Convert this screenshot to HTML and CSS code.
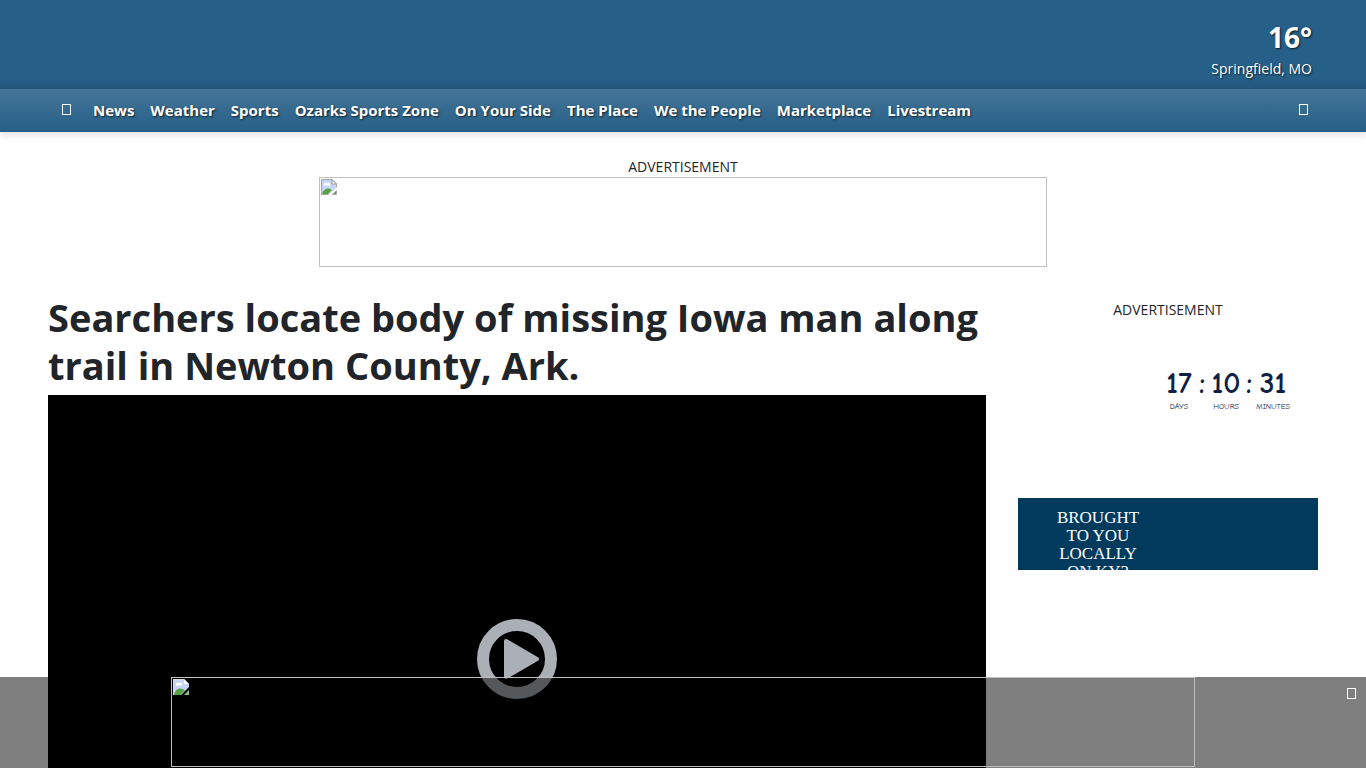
FILE: index.html
```html
<!DOCTYPE html>
<html lang="en">
<head>
    <meta charset="UTF-8">
    <meta name="viewport" content="width=device-width, initial-scale=1.0">
    <title>Searchers locate body of missing Iowa man along trail in Newton County, Ark.</title>
    <link rel="stylesheet" href="styles.css">
</head>
<body>
    <header class="site-header">
        <div class="masthead">
            <a href="#weather" class="weather">
                <span class="temp">16°</span>
                <span class="city">Springfield, MO</span>
            </a>
        </div>
        <nav class="main-nav">
            <a href="#home" class="nav-home" aria-label="Home"><span class="glyph"></span></a>
            <ul>
                <li><a href="#news">News</a></li>
                <li><a href="#weather">Weather</a></li>
                <li><a href="#sports">Sports</a></li>
                <li><a href="#ozarks">Ozarks Sports Zone</a></li>
                <li><a href="#onyourside">On Your Side</a></li>
                <li><a href="#theplace">The Place</a></li>
                <li><a href="#people">We the People</a></li>
                <li><a href="#marketplace">Marketplace</a></li>
                <li><a href="#livestream">Livestream</a></li>
            </ul>
            <button type="button" class="nav-search" aria-label="Search"><span class="glyph"></span></button>
        </nav>
    </header>

    <div class="top-ad">
        <p class="ad-label">ADVERTISEMENT</p>
        <a href="#ad" class="ad-frame leaderboard" aria-label="Advertisement">
            <svg class="ad-icon" width="16" height="16" viewBox="0 0 16 16">
                <path d="M0.5 0.5H11L15.5 5V15.5H0.5Z" fill="#c7d5f5" stroke="#a5a5a5"/>
                <path d="M3 6.500a2 2 0 0 1 3-2.500 2 2 0 0 1 3 2.500Z" fill="#fff"/>
                <path d="M1 15C2 11 5 9 8 9.500L11 11 7 15Z" fill="#58a246"/>
                <path d="M11 0.500V5H15.500Z" fill="#fff" stroke="#999"/>
                <path d="M7 16L16 8V11L10.500 16Z" fill="#fff"/>
                <path d="M12 15L15 12V15Z" fill="#58a246"/>
            </svg>
        </a>
    </div>

    <div class="page">
        <main class="story">
            <h1>Searchers locate body of missing Iowa man along trail in Newton County, Ark.</h1>
            <div class="player">
                <button type="button" class="play" aria-label="Play video">
                    <svg width="80" height="80" viewBox="0 0 80 80">
                        <circle cx="40" cy="40" r="34" fill="none" stroke="#abb0b7" stroke-width="12"/>
                        <path d="M29 22L60 40L29 58Z" fill="#abb0b7" stroke="#abb0b7" stroke-width="4" stroke-linejoin="round"/>
                    </svg>
                </button>
            </div>
        </main>

        <aside class="sidebar">
            <p class="ad-label">ADVERTISEMENT</p>
            <div class="countdown">
                <div class="unit"><span class="num">17</span><span class="name">DAYS</span></div>
                <span class="num colon">:</span>
                <div class="unit"><span class="num">10</span><span class="name">HOURS</span></div>
                <span class="num colon">:</span>
                <div class="unit"><span class="num">31</span><span class="name">MINUTES</span></div>
            </div>
            <div class="sponsor">
                <p>BROUGHT TO YOU LOCALLY ON KY3</p>
            </div>
        </aside>
    </div>

    <div class="sticky-ad">
        <a href="#ad" class="ad-frame banner" aria-label="Advertisement">
            <svg class="ad-icon" width="16" height="16" viewBox="0 0 16 16">
                <path d="M0 0H11L16 5V8L8 16H0Z" fill="#c7d5f5"/>
                <path d="M0.500 16V0.500H11" fill="none" stroke="#d8d8d8"/>
                <path d="M3 6.500a2 2 0 0 1 3-2.500 2 2 0 0 1 3 2.500Z" fill="#fff"/>
                <path d="M1 16C2 11 5 9 8 9.500L12 11 7 16Z" fill="#58a246"/>
                <path d="M11 0V5H16Z" fill="#fff"/>
                <path d="M11 16L16 11V16Z" fill="#8fbf83"/>
            </svg>
        </a>
        <button type="button" class="close" aria-label="Close"><span class="glyph"></span></button>
    </div>
</body>
</html>
```
FILE: styles.css
```css
* {
    margin: 0;
    padding: 0;
    box-sizing: border-box;
}

body {
    background: #fff;
    color: #212529;
    font-family: "Segoe UI", "Open Sans", sans-serif;
    font-size: 16px;
    line-height: 24px;
}

a {
    color: inherit;
    text-decoration: none;
}

button {
    background: none;
    border: none;
    cursor: pointer;
}

/* Header */
.site-header {
    color: #fff;
    background: #265f87;
    box-shadow: 0 2px 8px rgba(0, 0, 0, 0.15);
    text-shadow: 1px 1px 2px rgba(0, 0, 0, 0.7);
}

.masthead {
    display: flex;
    justify-content: flex-end;
    padding: 18px 54px 8px;
    background: linear-gradient(to bottom, #265f87 88%, #22567b);
}

.weather {
    display: flex;
    flex-direction: column;
    align-items: flex-end;
}

.temp {
    font-size: 28px;
    font-weight: 700;
    line-height: 39px;
}

.city {
    font-size: 14px;
    line-height: 24px;
}

.main-nav {
    display: flex;
    align-items: center;
    height: 43px;
    padding: 0 48px 2px;
    background: linear-gradient(to bottom, #457599, #265f87);
}

.main-nav ul {
    display: flex;
    list-style: none;
    flex: 1;
}

.main-nav li a {
    display: block;
    padding: 0 8px;
    font-size: 15px;
    font-weight: 700;
}

.nav-home {
    display: flex;
    padding: 8px 14px;
}

.nav-search {
    display: flex;
    padding: 8px 10px;
}

.glyph {
    display: block;
    width: 9px;
    height: 11px;
    border: 1px solid #fff;
}

/* Ads */
.top-ad {
    padding: 25px 16px 0;
}

.ad-label {
    font-size: 14px;
    line-height: 20px;
    text-align: center;
}

.ad-frame {
    display: block;
    max-width: 100%;
    height: 90px;
    margin: 0 auto;
    padding: 1px;
    border: 1px solid #c0c0c0;
}

.ad-icon {
    display: block;
}

.leaderboard {
    width: 728px;
}

.banner {
    width: 1024px;
}

/* Story */
.page {
    display: flex;
    gap: 32px;
    padding: 26px 48px;
}

.story {
    flex: 1;
}

h1 {
    margin-bottom: 6px;
    font-size: 38px;
    font-weight: 700;
    line-height: 48px;
}

.player {
    display: flex;
    align-items: center;
    justify-content: center;
    aspect-ratio: 16 / 9;
    background: #000;
}

.play svg {
    display: block;
}

.sidebar {
    width: 300px;
    padding-top: 7px;
}

.countdown {
    display: flex;
    justify-content: flex-end;
    height: 130px;
    margin: 48px 25px 0 0;
    color: #0f1f46;
    font-family: "Comic Sans MS", "Comic Neue", "Comic Relief", "Noto Sans", sans-serif;
}

.unit {
    display: flex;
    flex-direction: column;
    align-items: center;
    width: 40px;
}

.num {
    font-size: 30px;
    font-weight: 700;
    line-height: 32px;
}

.colon {
    width: 7px;
}

.name {
    font-size: 8px;
    line-height: 14px;
}

.sponsor {
    height: 72px;
    padding: 11px 0 0 32px;
    overflow: hidden;
    color: #fff;
    background: #003a5d;
    font-family: "Liberation Serif", serif;
}

.sponsor p {
    width: 96px;
    font-size: 17px;
    line-height: 18px;
    text-align: center;
}

/* Sticky banner */
.sticky-ad {
    position: fixed;
    right: 0;
    bottom: 0;
    left: 0;
    height: 91px;
    background: rgba(0, 0, 0, 0.5);
}

.close {
    position: absolute;
    top: 3px;
    right: 2px;
    padding: 8px;
}
```
